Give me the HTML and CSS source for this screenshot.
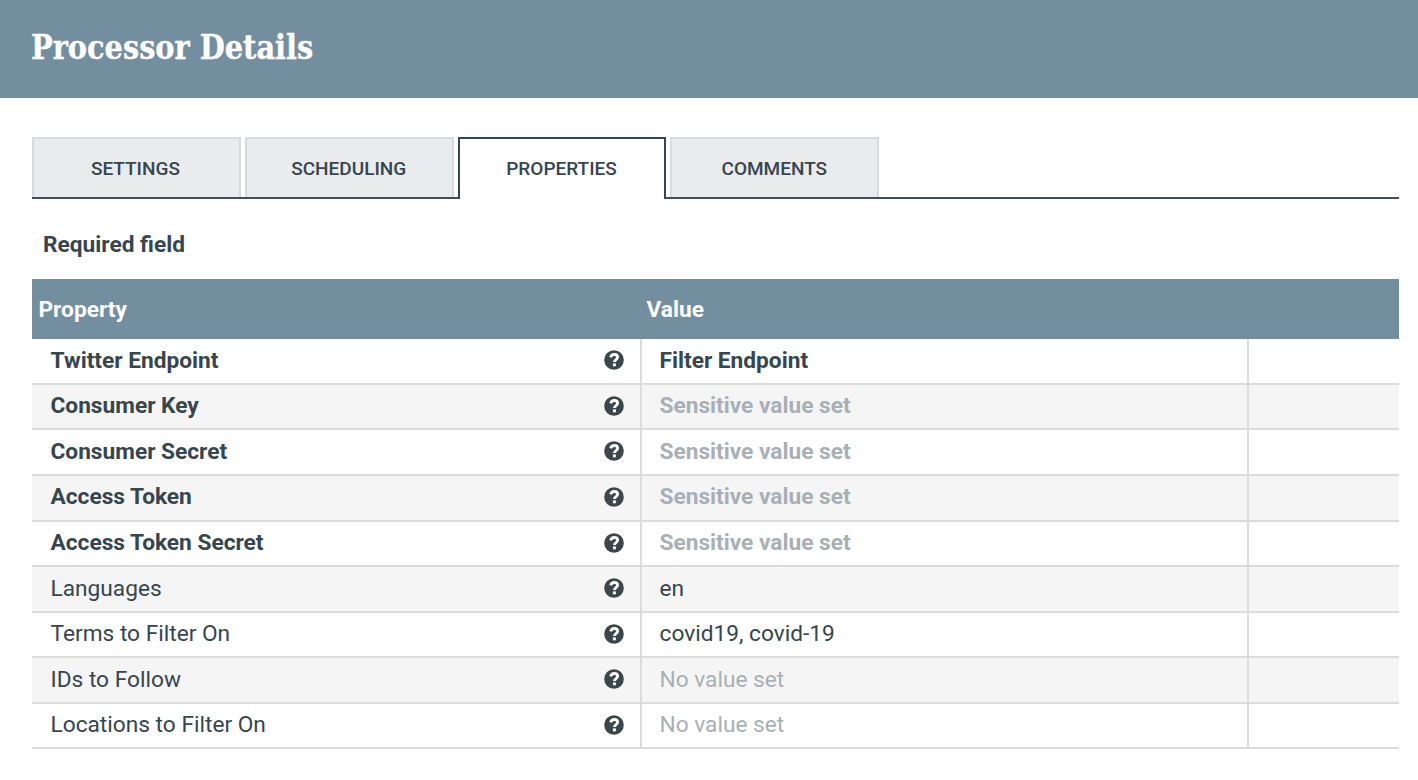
FILE: index.html
```html
<!DOCTYPE html>
<html lang="en">
<head>
<meta charset="utf-8">
<title>Processor Details</title>
<link rel="stylesheet" href="styles.css">
</head>
<body>
<svg class="sprite" width="0" height="0" aria-hidden="true">
  <symbol id="help" viewBox="0 0 20 20">
    <circle cx="10" cy="10" r="9.8" fill="#3b474b"/>
    <path d="M6.6 7.4C7.2 5.3 8.4 4.5 10.2 4.5C12.3 4.5 13.6 5.7 13.6 7.3C13.6 9.6 10.4 9.6 10.4 12.1" fill="none" stroke="#fff" stroke-width="2.8"/>
    <rect x="8.9" y="13.4" width="3" height="2.9" fill="#fff"/>
  </symbol>
</svg>
<header class="titlebar"><h1 class="title">Processor Details</h1></header>
<main class="content">
  <nav class="tabs">
    <div class="tab settings"><span>SETTINGS</span></div>
    <div class="tab"><span>SCHEDULING</span></div>
    <div class="tab active"><span>PROPERTIES</span></div>
    <div class="tab"><span>COMMENTS</span></div>
  </nav>
  <p class="required"><span>Required field</span></p>
  <section class="table">
    <div class="row head"><div>Property</div><div>Value</div><div></div></div>
    <div class="row bold"><div class="name"><span>Twitter Endpoint</span><svg class="help"><use href="#help"/></svg></div><div class="value"><span>Filter Endpoint</span></div><div class="actions"></div></div>
    <div class="row bold"><div class="name"><span>Consumer Key</span><svg class="help"><use href="#help"/></svg></div><div class="value unset"><span>Sensitive value set</span></div><div class="actions"></div></div>
    <div class="row bold"><div class="name"><span>Consumer Secret</span><svg class="help"><use href="#help"/></svg></div><div class="value unset"><span>Sensitive value set</span></div><div class="actions"></div></div>
    <div class="row bold"><div class="name"><span>Access Token</span><svg class="help"><use href="#help"/></svg></div><div class="value unset"><span>Sensitive value set</span></div><div class="actions"></div></div>
    <div class="row bold"><div class="name"><span>Access Token Secret</span><svg class="help"><use href="#help"/></svg></div><div class="value unset"><span>Sensitive value set</span></div><div class="actions"></div></div>
    <div class="row"><div class="name"><span>Languages</span><svg class="help"><use href="#help"/></svg></div><div class="value"><span>en</span></div><div class="actions"></div></div>
    <div class="row"><div class="name"><span>Terms to Filter On</span><svg class="help"><use href="#help"/></svg></div><div class="value"><span>covid19, covid-19</span></div><div class="actions"></div></div>
    <div class="row"><div class="name"><span>IDs to Follow</span><svg class="help"><use href="#help"/></svg></div><div class="value unset"><span>No value set</span></div><div class="actions"></div></div>
    <div class="row"><div class="name"><span>Locations to Filter On</span><svg class="help"><use href="#help"/></svg></div><div class="value unset"><span>No value set</span></div><div class="actions"></div></div>
  </section>
</main>
</body>
</html>
```
FILE: styles.css
```css
* { box-sizing: border-box; }
body { margin: 0; height: 780px; overflow: hidden; background: #fff; color: #35464e; font-family: Roboto, sans-serif; font-size: 22.7px; }
.sprite { display: block; }
.titlebar { height: 98px; padding: 28px 0 0 31px; background: #728e9f; }
.title { display: inline-block; margin: 0; color: #fff; font-family: "DejaVu Serif", serif; font-size: 33px; font-weight: 700; line-height: 40px; white-space: nowrap; transform: scaleX(.873); transform-origin: left; -webkit-text-stroke: .4px #fff; }
.content { padding: 39px 19px 0 32px; }
.tabs { display: flex; gap: 4px; height: 62px; background: linear-gradient(#3f5059, #3f5059) 0 100% / 100% 2px no-repeat; }
.tab { display: flex; align-items: center; justify-content: center; width: 208.8px; height: 60px; padding: 0 1px 0 0; border: 2px solid #d8dbdd; border-bottom: 0; background: #e9ebed; font-size: 19px; font-weight: 500; }
.tab.settings span { margin-right: 1px; }
.tab.active { height: 62px; padding-bottom: 2px; border-color: #34474f; background: #fff; }
.required { margin: 0; padding: 31px 0 0 11px; height: 80px; font-weight: 700; line-height: 30px; }
.row { display: grid; grid-template-columns: 608px 607px 1fr; height: 45.57px; line-height: 30px; }
.row > div { border-bottom: 2px solid #dadcdd; }
.row:nth-child(odd) { background: #f5f5f5; }
.row.head { height: 60.3px; background: #728e9f; color: #fff; font-weight: 700; line-height: 61px; }
.row.head > div { padding-left: 6.5px; border: 0; }
.bold { font-weight: 700; }
.name { display: flex; align-items: center; justify-content: space-between; padding: 0 16px 0 18.5px; }
.name span, .value span { margin-bottom: .7px; }
.help { width: 20px; height: 20px; margin-bottom: 1.6px; }
.value, .actions { display: flex; align-items: center; padding-left: 17.5px; border-left: 2px solid #dadcdd; }
.unset { color: #a8b0b5; }
```
